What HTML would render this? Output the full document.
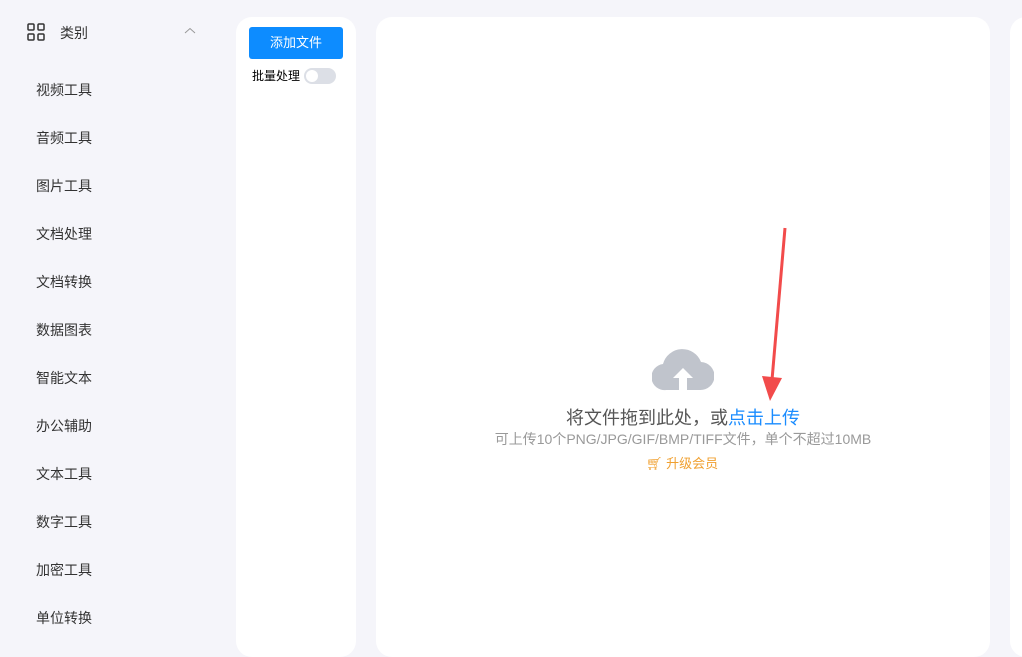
<!DOCTYPE html><html><head><meta charset="utf-8"><style>
body{margin:0;width:1022px;height:637px;background:#f5f5fa;font-family:"Liberation Sans","Noto Sans CJK SC",sans-serif;position:relative;overflow:hidden}
.a{position:absolute}
.side div{position:absolute;left:36px;font-size:14px;color:#333}
.p{background:#fff;border-radius:16px;position:absolute}
</style></head><body>
<svg class="a" style="left:27px;top:23px" width="18" height="18" viewBox="0 0 18 18" fill="none" stroke="#333" stroke-width="1.5"><rect x="1" y="1" width="6" height="6" rx="1"/><rect x="11" y="1" width="6" height="6" rx="1"/><rect x="1" y="11" width="6" height="6" rx="1"/><rect x="11" y="11" width="6" height="6" rx="1"/></svg>
<div class="a" style="left:60px;top:23px;font-size:14px;color:#333">类别</div>
<svg class="a" style="left:184px;top:27px" width="12" height="8"><path d="M1 6L6 1.5L11 6" stroke="#999" fill="none"/></svg>
<div class="side">
<div style="top:80px">视频工具</div><div style="top:128px">音频工具</div><div style="top:176px">图片工具</div><div style="top:224px">文档处理</div><div style="top:272px">文档转换</div><div style="top:320px">数据图表</div><div style="top:368px">智能文本</div><div style="top:416px">办公辅助</div><div style="top:464px">文本工具</div><div style="top:512px">数字工具</div><div style="top:560px">加密工具</div><div style="top:608px">单位转换</div>
</div>
<div class="p" style="left:236px;top:17px;width:120px;height:640px"></div>
<div class="a" style="left:249px;top:27px;width:94px;height:32px;background:#0d8cff;border-radius:3px;color:#fff;font-size:13px;line-height:31px;text-align:center">添加文件</div>
<div class="a" style="left:252px;top:67px;font-size:12px;color:#000">批量处理</div>
<div class="a" style="left:304px;top:68px;width:32px;height:16px;border-radius:8px;background:#dcdfe6"></div>
<div class="a" style="left:306px;top:70px;width:12px;height:12px;border-radius:6px;background:#fff"></div>
<div class="p" style="left:376px;top:17px;width:614px;height:640px"></div>
<div class="p" style="left:1010px;top:17px;width:40px;height:640px"></div>
<svg class="a" style="left:652px;top:346px" width="62" height="46" viewBox="0 0 62 46"><path d="M14 44A13 13 0 0 1 11 18A20 20 0 0 1 49 16A14 14 0 0 1 48 44Z" fill="#c0c4cc"/><path d="M31 22L21 32H27V44H35V32H41Z" fill="#fff"/></svg>
<div class="a" style="left:376px;width:614px;top:404px;text-align:center;font-size:18px;color:#555">将文件拖到此处，或<span style="color:#1a8cff">点击上传</span></div>
<div class="a" style="left:376px;width:614px;top:429px;text-align:center;font-size:14px;color:#999">可上传10个PNG/JPG/GIF/BMP/TIFF文件，单个不超过10MB</div>
<div class="a" style="left:646px;top:453px;font-size:13px;color:#f0a030">🛒︎ 升级会员</div>
<svg class="a" style="left:0;top:0" width="1022" height="637"><line x1="785" y1="228" x2="772" y2="380" stroke="#f24b4b" stroke-width="3"/><path d="M762 376L782 378L770 401Z" fill="#f24b4b"/></svg>
</body></html>
